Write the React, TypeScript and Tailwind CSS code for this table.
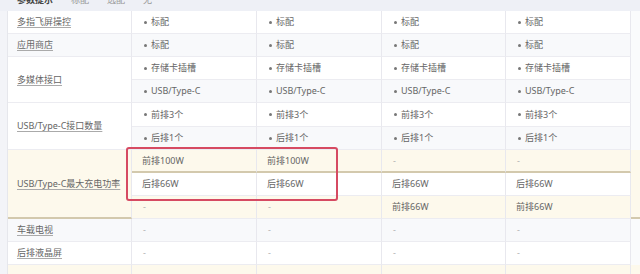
import React from 'react';

type Cell = { text: string; bullet?: boolean };

const font = "font-['Noto_Sans','Noto_Sans_CJK_SC',sans-serif]";

function CellText({ c }: { c: Cell }) {
  if (c.text === '-') {
    return <span className="pl-[11px] text-[#b0b0b0]">-</span>;
  }
  if (c.bullet) {
    return (
      <span className="flex items-center pl-[12px] text-[#666]">
        <span className="mr-[4px] inline-block h-[3px] w-[3px] rounded-full bg-[#777]" />
        {c.text}
      </span>
    );
  }
  return <span className="pl-[10px] text-[#666]">{c.text}</span>;
}

const b = (text: string): Cell => ({ text, bullet: true });
const p = (text: string): Cell => ({ text });

// sub rows: bg, cells for 4 car columns
const rows: { bg: string; cells: Cell[]; line?: boolean }[] = [
  { bg: 'bg-white', cells: [b('标配'), b('标配'), b('标配'), b('标配')] },
  { bg: 'bg-[#f8f9fb]', cells: [b('标配'), b('标配'), b('标配'), b('标配')] },
  { bg: 'bg-white', cells: [b('存储卡插槽'), b('存储卡插槽'), b('存储卡插槽'), b('存储卡插槽')] },
  { bg: 'bg-[#f8f9fb]', cells: [b('USB/Type-C'), b('USB/Type-C'), b('USB/Type-C'), b('USB/Type-C')] },
  { bg: 'bg-white', cells: [b('前排3个'), b('前排3个'), b('前排3个'), b('前排3个')] },
  { bg: 'bg-[#f8f9fb]', cells: [b('后排1个'), b('后排1个'), b('后排1个'), b('后排1个')] },
  { bg: 'bg-[#fdf9ec]', cells: [p('前排100W'), p('前排100W'), p('-'), p('-')], line: true },
  { bg: 'bg-white', cells: [p('后排66W'), p('后排66W'), p('后排66W'), p('后排66W')] },
  { bg: 'bg-[#fdf9ec]', cells: [p('-'), p('-'), p('前排66W'), p('前排66W')] },
  { bg: 'bg-[#f8f9fb]', cells: [p('-'), p('-'), p('-'), p('-')] },
  { bg: 'bg-white', cells: [p('-'), p('-'), p('-'), p('-')] },
  { bg: 'bg-[#fdf9ec]', cells: [p(''), p(''), p(''), p('')] },
];

const labels: { text: string; start: string; span: string; bg: string; hl?: boolean }[] = [
  { text: '多指飞屏操控', start: 'row-start-1', span: 'row-span-1', bg: 'bg-white' },
  { text: '应用商店', start: 'row-start-2', span: 'row-span-1', bg: 'bg-[#f8f9fb]' },
  { text: '多媒体接口', start: 'row-start-3', span: 'row-span-2', bg: 'bg-white' },
  { text: 'USB/Type-C接口数量', start: 'row-start-5', span: 'row-span-2', bg: 'bg-white' },
  { text: 'USB/Type-C最大充电功率', start: 'row-start-7', span: 'row-span-3', bg: 'bg-[#fdf9ec]', hl: true },
  { text: '车载电视', start: 'row-start-10', span: 'row-span-1', bg: 'bg-[#f8f9fb]' },
  { text: '后排液晶屏', start: 'row-start-11', span: 'row-span-1', bg: 'bg-white' },
  { text: '', start: 'row-start-12', span: 'row-span-1', bg: 'bg-[#fdf9ec]' },
];

const colStarts = ['col-start-3', 'col-start-4', 'col-start-5', 'col-start-6'];
const rowStarts = [
  'row-start-1', 'row-start-2', 'row-start-3', 'row-start-4', 'row-start-5', 'row-start-6',
  'row-start-7', 'row-start-8', 'row-start-9', 'row-start-10', 'row-start-11', 'row-start-12',
];

export default function App() {
  return (
    <div className={`relative h-[274px] w-[640px] overflow-hidden bg-[#f3f4f8] text-[9px] ${font}`}>
      {/* header strip, scrolled mostly out of view */}
      <div className="flex h-[11px] items-start overflow-hidden bg-[#eef0f6] pl-[17px]">
        <div className="-mt-[7px] flex gap-[18px] text-[9px] leading-[14px]">
          <span className="font-bold text-[#444]">参数提示</span>
          <span className="text-[#999]">标配</span>
          <span className="text-[#999]">选配</span>
          <span className="text-[#999]">无</span>
        </div>
      </div>

      <div className="grid grid-cols-[8px_124px_125px_125px_124px_125px_9px] grid-rows-[23px_23px_23px_23px_24px_23px_23px_23px_23px_23px_23px_23px]">
        {/* left gutter */}
        <div className="col-start-1 row-span-12 row-start-1 border-r border-[#e6e7ec] bg-[#f3f4f8]" />

        {labels.map((l) => (
          <div
            key={l.start}
            className={`col-start-2 ${l.start} ${l.span} ${l.bg} flex items-center whitespace-nowrap border-r border-[#e8e8ee] pl-[9px] ${
              l.hl ? 'border-b-2 border-b-[#d3c9ad]' : 'border-b border-b-[#ececf1]'
            }`}
          >
            {l.text && (
              <span className="text-[#666] underline decoration-[#aaa] underline-offset-[2px]">{l.text}</span>
            )}
          </div>
        ))}

        {rows.map((r, i) =>
          r.cells.map((c, j) => (
            <div
              key={`${i}-${j}`}
              className={`${colStarts[j]} ${rowStarts[i]} ${r.bg} flex items-center border-r border-[#e8e8ee] ${
                r.line ? 'border-b-2 border-b-[#d3c9ad]' : 'border-b border-b-[#ececf1]'
              }`}
            >
              {c.text && <CellText c={c} />}
            </div>
          ))
        )}

        {/* right gutter */}
        <div className="col-start-7 row-span-6 row-start-1 bg-[#fafbfc]" />
        <div className="col-start-7 row-span-3 row-start-7 border-b-2 border-[#d3c9ad] bg-[#fdf9ec]" />
        <div className="col-start-7 row-span-2 row-start-10 bg-[#fafbfc]" />
        <div className="col-start-7 row-start-12 bg-[#fdf9ec]" />
      </div>

      {/* annotation box */}
      <div className="absolute left-[126px] top-[147px] h-[54px] w-[212px] rounded-[3px] border-2 border-[#d64a62]" />
    </div>
  );
}
